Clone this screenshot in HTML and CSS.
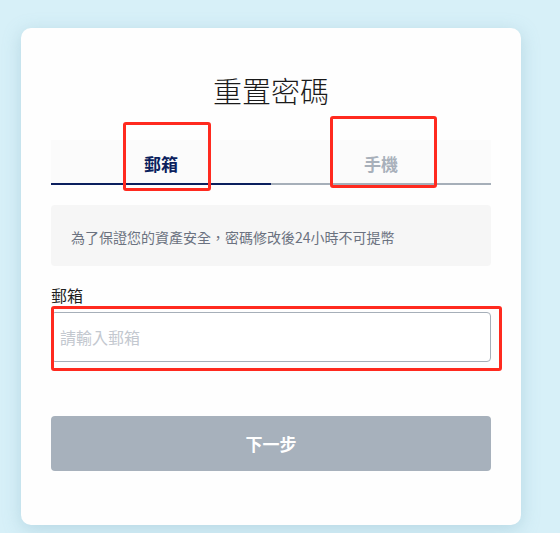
FILE: index.html
```html
<!DOCTYPE html>
<html lang="zh-Hant">
<head>
  <meta charset="UTF-8">
  <meta name="viewport" content="width=device-width, initial-scale=1.0">
  <title>重置密碼</title>
  <link rel="stylesheet" href="styles.css">
</head>
<body>
  <div class="reset-card">
    <h1>重置密碼</h1>

    <div class="tabs">
      <div class="tab active">郵箱</div>
      <div class="tab">手機</div>
    </div>

    <div class="notice">為了保證您的資產安全，密碼修改後24小時不可提幣</div>

    <label class="field-label" for="email">郵箱</label>
    <input class="field-input" id="email" type="text" placeholder="請輸入郵箱">

    <button class="next-btn" disabled>下一步</button>
  </div>

  <!-- annotation marks -->
  <div class="mark mark-tab-email"></div>
  <div class="mark mark-tab-phone"></div>
  <div class="mark mark-input"></div>
</body>
</html>
```

FILE: styles.css
```css
body {
  margin: 0;
  min-height: 533px;
  font-family: "Noto Sans CJK TC", "Noto Sans", sans-serif;
  background-color: #d7f0f8;
  color: #1f1f1f;
  position: relative;
  overflow: hidden;
}

.reset-card {
  margin: 28px 0 0 21px;
  width: 500px;
  box-sizing: border-box;
  padding: 42px 30px 54px;
  background-color: #fefefe;
  border-radius: 10px;
  box-shadow: 0 4px 18px rgba(120, 170, 190, 0.35);
}

.reset-card h1 {
  margin: 0;
  font-size: 29px;
  font-weight: 300;
  line-height: 40px;
  text-align: center;
  color: #1a1a1a;
}

.tabs {
  display: flex;
  margin-top: 30px;
  background-color: #fbfbfb;
}

.tab {
  flex: 1;
  text-align: center;
  font-size: 17px;
  font-weight: 700;
  line-height: 24px;
  padding: 12px 0 7px;
  color: #a8b0ba;
  border-bottom: 2px solid #a6afb9;
}

.tab.active {
  color: #0b1f5e;
  border-bottom-color: #0b1f5e;
}

.notice {
  margin-top: 20px;
  padding: 22px 20px 18px;
  font-size: 14px;
  line-height: 21px;
  color: #6b7280;
  background-color: #f6f6f6;
  border-radius: 4px;
}

.field-label {
  display: block;
  margin-top: 18px;
  font-size: 16px;
  line-height: 22px;
  color: #1f1f1f;
}

.field-input {
  display: block;
  width: 100%;
  box-sizing: border-box;
  height: 50px;
  margin-top: 6px;
  padding: 0 8px;
  font-family: inherit;
  font-size: 16px;
  border: 1px solid #a6afb9;
  border-radius: 4px;
  background-color: #fff;
  outline: none;
}

.field-input::placeholder {
  color: #c3c8cf;
}

.next-btn {
  display: block;
  width: 100%;
  height: 55px;
  margin-top: 54px;
  border: none;
  border-radius: 4px;
  background-color: #a7b1bc;
  color: #fff;
  font-family: inherit;
  font-size: 17px;
  font-weight: 700;
}

.mark {
  position: absolute;
  border: 3px solid #ff2a1f;
  border-radius: 3px;
  box-sizing: border-box;
}

.mark-tab-email {
  left: 123px;
  top: 122px;
  width: 88px;
  height: 69px;
}

.mark-tab-phone {
  left: 330px;
  top: 116px;
  width: 107px;
  height: 72px;
}

.mark-input {
  left: 51px;
  top: 306px;
  width: 451px;
  height: 65px;
}
```
